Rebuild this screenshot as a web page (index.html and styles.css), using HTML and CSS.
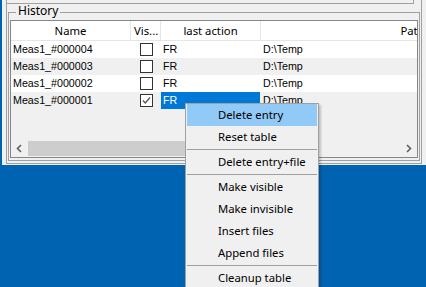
FILE: index.html
```html
<!DOCTYPE html>
<html>
<head>
<meta charset="utf-8">
<link rel="stylesheet" href="styles.css">
</head>
<body>
<div class="win">
  <div class="frame">
    <div class="prev"></div>
    <div class="group">
      <div class="legend">History</div>
      <div class="list">
        <div class="head">
          <div class="th center">Name</div>
          <div class="th vis">Vis...</div>
          <div class="th center">last action</div>
          <div class="th center">Path</div>
        </div>
        <div class="row odd">
          <div class="td">Meas1_#000004</div>
          <div class="td cb-cell"><span class="cb"></span></div>
          <div class="td">FR</div>
          <div class="td">D:\Temp</div>
        </div>
        <div class="row">
          <div class="td">Meas1_#000003</div>
          <div class="td cb-cell"><span class="cb"></span></div>
          <div class="td">FR</div>
          <div class="td">D:\Temp</div>
        </div>
        <div class="row odd">
          <div class="td">Meas1_#000002</div>
          <div class="td cb-cell"><span class="cb"></span></div>
          <div class="td">FR</div>
          <div class="td">D:\Temp</div>
        </div>
        <div class="row">
          <div class="td">Meas1_#000001</div>
          <div class="td cb-cell"><span class="cb"><svg width="11" height="11" viewBox="0 0 11 11"><path d="M2 5.5 L4.3 8 L9 2.5" fill="none" stroke="#555" stroke-width="1.3"/></svg></span></div>
          <div class="td sel">FR</div>
          <div class="td">D:\Temp</div>
        </div>
        <div class="fill"></div>
        <div class="hscroll">
          <div class="sbtn"><svg width="17" height="17" viewBox="0 0 17 17"><path d="M10 5 L6.5 8.5 L10 12" fill="none" stroke="#606060" stroke-width="1.6"/></svg></div>
          <div class="track"><div class="thumb"></div></div>
          <div class="sbtn"><svg width="17" height="17" viewBox="0 0 17 17"><path d="M7 5 L10.5 8.5 L7 12" fill="none" stroke="#606060" stroke-width="1.6"/></svg></div>
        </div>
      </div>
    </div>
  </div>
</div>
<div class="menu">
  <div class="mi hot">Delete entry</div>
  <div class="mi">Reset table</div>
  <div class="sep"></div>
  <div class="mi">Delete entry+file</div>
  <div class="sep"></div>
  <div class="mi">Make visible</div>
  <div class="mi">Make invisible</div>
  <div class="mi">Insert files</div>
  <div class="mi">Append files</div>
  <div class="sep"></div>
  <div class="mi">Cleanup table</div>
</div>
</body>
</html>
```
FILE: styles.css
```css
* { box-sizing: border-box; }
html, body { margin: 0; padding: 0; height: 100%; }
body {
  background: #0063b1;
  overflow: hidden;
  font-family: "Noto Sans", "Open Sans", sans-serif;
  font-size: 11.3px;
  color: #000;
}
.win {
  margin-left: 2px;
  width: 424px;
  height: 165px;
  background: #f0f0f0;
  padding-left: 4px;
}
.frame {
  width: 416px;
  height: 164px;
  border: 1px solid #a0a0a0;
  border-top: none;
}
.prev {
  width: 407px;
  height: 4px;
  border-right: 1px solid #a0a0a0;
  border-bottom: 1px solid #a0a0a0;
}
.group {
  margin-top: 8px;
  margin-left: 1px;
  width: 412px;
  height: 149px;
  border: 1px solid #a0a0a0;
}
.legend {
  margin-top: -9px;
  margin-left: 7px;
  padding: 0 2px;
  width: max-content;
  background: #f0f0f0;
  font-size: 12px;
  line-height: 14px;
  height: 14px;
}
.list {
  margin-top: 2px;
  margin-left: 1px;
  width: 408px;
  height: 138px;
  border: 1px solid #828790;
  background: #f0f0f0;
  overflow: hidden;
  display: flex;
  flex-direction: column;
}
.head, .row {
  display: grid;
  grid-template-columns: 120px 30px 100px 304px;
  width: 554px;
  flex: none;
}
.head {
  height: 20px;
  background: #fff;
}
.th {
  border-right: 1px solid #e5e5e5;
  border-bottom: 1px solid #e5e5e5;
  line-height: 19px;
  white-space: nowrap;
  overflow: hidden;
}
.th.center { text-align: center; }
.th.vis { padding-left: 3px; overflow: visible; }
.row {
  height: 17px;
  font-family: "Liberation Sans", Arial, sans-serif;
  font-size: 10.7px;
  line-height: 17px;
}
.row.odd { background: #fff; }
.td {
  padding-left: 2px;
  white-space: nowrap;
  overflow: hidden;
}
.cb-cell {
  padding-left: 0;
  display: flex;
  justify-content: center;
  align-items: center;
}
.cb {
  width: 13px;
  height: 13px;
  border: 1px solid #333;
  background: #fff;
  display: flex;
  align-items: center;
  justify-content: center;
}
.td.sel {
  background: #0078d7;
  color: #fff;
  margin-right: 1px;
}
.fill { flex: 1; }
.hscroll {
  flex: none;
  height: 17px;
  display: flex;
  background: #f0f0f0;
}
.sbtn { width: 17px; height: 17px; flex: none; }
.sbtn svg { display: block; }
.track { flex: 1; padding: 1px 0; }
.thumb {
  width: 270px;
  height: 15px;
  background: #cdcdcd;
}
.menu {
  position: absolute;
  left: 185px;
  top: 103px;
  width: 134px;
  height: 184px;
  overflow: hidden;
  background: #f0f0f0;
  border: 1px solid #a0a0a0;
  border-bottom: none;
  padding: 0 1px;
  box-shadow: 2px 2px 2px rgba(0, 0, 0, 0.2);
}
.mi {
  height: 22px;
  line-height: 22px;
  padding-left: 31px;
  white-space: nowrap;
}
.mi.hot { background: #91c9f7; }
.sep {
  height: 3px;
  padding-top: 1px;
}
.sep::before {
  content: "";
  display: block;
  height: 1px;
  background: #a0a0a0;
}
```
